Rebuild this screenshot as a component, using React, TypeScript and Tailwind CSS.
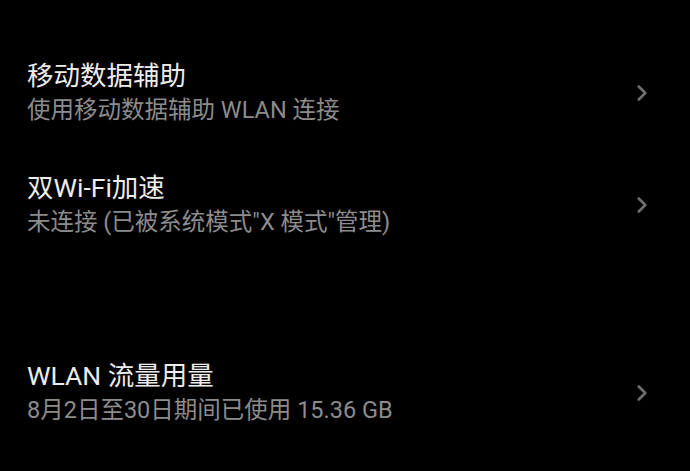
import { ChevronRight } from 'lucide-react'

const rows = [
  { title: '移动数据辅助', sub: '使用移动数据辅助 WLAN 连接' },
  { title: '双Wi-Fi加速', sub: '未连接 (已被系统模式"X 模式"管理)' },
]

function Row({ title, sub }: { title: string; sub: string }) {
  return (
    <div className="flex items-center py-[21px] pl-[27px] pr-[35px]">
      <div className="flex-1 min-w-0">
        <p className="text-[26.5px] leading-[35px] text-[#ececec]">{title}</p>
        <p className="text-[23.5px] leading-[35px] text-[#8c8c8c]">{sub}</p>
      </div>
      <ChevronRight size={26} strokeWidth={2.5} className="text-[#6e6e6e]" />
    </div>
  )
}

export default function App() {
  return (
    <div
      className="w-[690px] h-[471px] bg-black overflow-hidden pt-[37px]"
      style={{ fontFamily: 'Roboto, "Noto Sans CJK SC", sans-serif' }}
    >
      {rows.map((r) => (
        <Row key={r.title} {...r} />
      ))}
      <div className="h-[76px]" />
      <Row title="WLAN 流量用量" sub="8月2日至30日期间已使用 15.36 GB" />
    </div>
  )
}
